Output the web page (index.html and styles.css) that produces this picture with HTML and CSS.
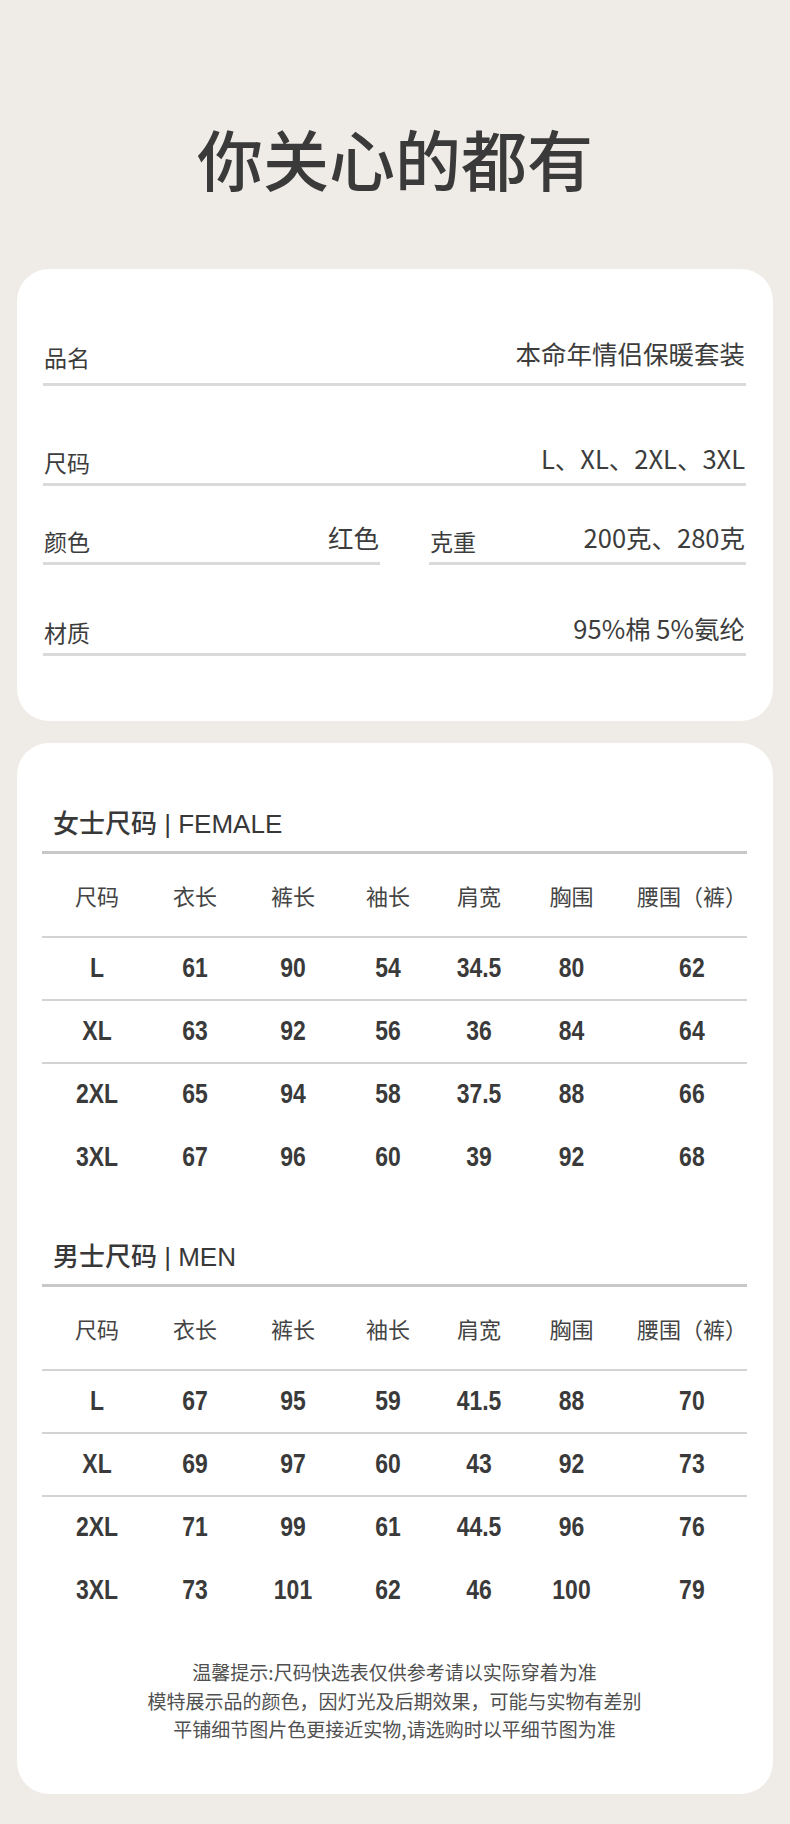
FILE: index.html
```html
<!DOCTYPE html>
<html lang="zh-CN">
<head>
<meta charset="utf-8">
<title>你关心的都有</title>
<link rel="stylesheet" href="styles.css">
</head>
<body>
<div class="page">
  <h1 class="title">你关心的都有</h1>

  <section class="card info">
    <div class="row row-first"><span class="label">品名</span><span class="value">本命年情侣保暖套装</span></div>
    <div class="row row-size"><span class="label">尺码</span><span class="value">L、XL、2XL、3XL</span></div>
    <div class="row-split">
      <div class="row"><span class="label">颜色</span><span class="value">红色</span></div>
      <div class="row"><span class="label">克重</span><span class="value">200克、280克</span></div>
    </div>
    <div class="row row-material"><span class="label">材质</span><span class="value">95%棉 5%氨纶</span></div>
  </section>

  <section class="card sizes">
    <h2 class="size-title">女士尺码 | FEMALE</h2>
    <div class="size-table">
      <div class="tr th line"><span>尺码</span><span>衣长</span><span>裤长</span><span>袖长</span><span>肩宽</span><span>胸围</span><span>腰围（裤）</span></div>
      <div class="tr line"><span>L</span><span>61</span><span>90</span><span>54</span><span>34.5</span><span>80</span><span>62</span></div>
      <div class="tr line"><span>XL</span><span>63</span><span>92</span><span>56</span><span>36</span><span>84</span><span>64</span></div>
      <div class="tr"><span>2XL</span><span>65</span><span>94</span><span>58</span><span>37.5</span><span>88</span><span>66</span></div>
      <div class="tr"><span>3XL</span><span>67</span><span>96</span><span>60</span><span>39</span><span>92</span><span>68</span></div>
    </div>

    <h2 class="size-title men">男士尺码 | MEN</h2>
    <div class="size-table">
      <div class="tr th line"><span>尺码</span><span>衣长</span><span>裤长</span><span>袖长</span><span>肩宽</span><span>胸围</span><span>腰围（裤）</span></div>
      <div class="tr line"><span>L</span><span>67</span><span>95</span><span>59</span><span>41.5</span><span>88</span><span>70</span></div>
      <div class="tr line"><span>XL</span><span>69</span><span>97</span><span>60</span><span>43</span><span>92</span><span>73</span></div>
      <div class="tr"><span>2XL</span><span>71</span><span>99</span><span>61</span><span>44.5</span><span>96</span><span>76</span></div>
      <div class="tr"><span>3XL</span><span>73</span><span>101</span><span>62</span><span>46</span><span>100</span><span>79</span></div>
    </div>

    <p class="note">温馨提示:尺码快选表仅供参考请以实际穿着为准<br>模特展示品的颜色，因灯光及后期效果，可能与实物有差别<br>平铺细节图片色更接近实物,请选购时以平细节图为准</p>
  </section>
</div>
</body>
</html>
```

FILE: styles.css
```css
* { box-sizing: border-box; }

body {
  margin: 0;
  background: #efebe7;
  font-family: "Noto Sans CJK SC", "Noto Sans", sans-serif;
  color: #3c3c3c;
}

.page {
  width: 790px;
  padding: 124px 17px 28px;
}

.title {
  margin: 0 0 79px;
  font-size: 66px;
  line-height: 66px;
  font-weight: 500;
  text-align: center;
  color: #3a3a3a;
}

.card {
  background: #fff;
  border-radius: 32px;
}

/* ---------- info card ---------- */
.info {
  padding: 71px 27px 65px 26px;
}

.row {
  display: flex;
  justify-content: space-between;
  align-items: flex-end;
  border-bottom: 3px solid #dadada;
}

.label {
  font-size: 23px;
  line-height: 23px;
  padding-bottom: 9px;
  padding-left: 1px;
}

.value {
  font-size: 25.5px;
  line-height: 26px;
  padding-bottom: 12px;
  padding-right: 1px;
}

.row-first .label { padding-bottom: 14px; }
.row-first .value { padding-bottom: 17px; }

.row-size { margin-top: 59px; }

.row-split {
  margin-top: 38px;
  display: grid;
  grid-template-columns: 337px 1fr;
  column-gap: 49px;
}

.row-material { margin-top: 50px; }

/* ---------- size card ---------- */
.sizes {
  margin-top: 22px;
  padding: 69px 26px 50px 25px;
}

.size-title {
  margin: 0;
  padding: 0 0 14px 11px;
  font-family: "Liberation Sans", "Noto Sans CJK SC", sans-serif;
  font-size: 26px;
  line-height: 25px;
  font-weight: 500;
  color: #383838;
  border-bottom: 3px solid #c8c8c8;
}

.size-title.men { margin-top: 55px; }

.tr {
  display: grid;
  grid-template-columns: 110px 86px 110px 80px 102px 83px 1fr;
  align-items: center;
  height: 63px;
  border-bottom: 2px solid transparent;
  text-align: center;
  font-family: "Liberation Sans", "Roboto", sans-serif;
  font-weight: 700;
  font-size: 27px;
  color: #3a3a3a;
}

.tr span {
  transform: scaleX(0.85);
}

.tr span:last-child { padding-left: 28px; }

.tr.line { border-bottom-color: #d3d3d3; }

.tr.th {
  height: 84px;
  font-family: "Noto Sans CJK SC", sans-serif;
  font-weight: 400;
  font-size: 22px;
  color: #444;
}

.tr.th span { transform: none; }
.tr.th span:last-child { padding-left: 24px; }

.note {
  margin: 35px 0 0;
  font-size: 19px;
  line-height: 28.5px;
  text-align: center;
  color: #505050;
}
```
